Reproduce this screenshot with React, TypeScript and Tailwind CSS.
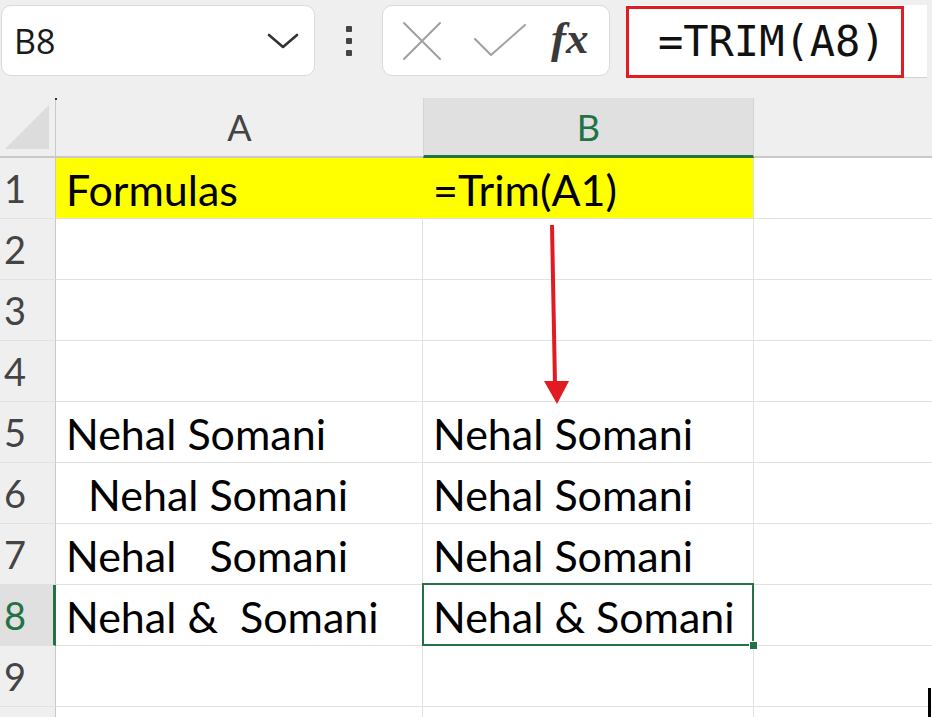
import React from "react";

const cellFont = { fontFamily: "Lato, 'Open Sans', sans-serif" };

const rows: { a: string; b: string }[] = [
  { a: "Formulas", b: "=Trim(A1)" },
  { a: "", b: "" },
  { a: "", b: "" },
  { a: "", b: "" },
  { a: "Nehal Somani", b: "Nehal Somani" },
  { a: "  Nehal Somani", b: "Nehal Somani" },
  { a: "Nehal   Somani", b: "Nehal Somani" },
  { a: "Nehal &  Somani", b: "Nehal & Somani" },
  { a: "", b: "" },
  { a: "", b: "" },
];

export default function App() {
  return (
    <div className="relative w-[932px] h-[717px] overflow-hidden bg-[#efefef]" style={{ fontFamily: "Lato, sans-serif" }}>
      {/* Top toolbar */}
      <div className="flex items-start h-[98px] pt-[5px]">
        <div className="ml-[1px] w-[314px] h-[71px] rounded-[10px] bg-white border border-[#dadada] flex items-center justify-between pl-[12px] pr-[14px]">
          <span className="text-[34px] text-[#1a1a1a] leading-none" style={{ fontFamily: "'Open Sans', sans-serif" }}>B8</span>
          <svg width="34" height="20" viewBox="0 0 34 20">
            <path d="M3 4 L17 16 L31 4" fill="none" stroke="#333" strokeWidth="2.6" strokeLinecap="round" strokeLinejoin="round" />
          </svg>
        </div>
        <div className="w-[67px] h-[71px] flex flex-col items-center justify-center gap-[6px]">
          <div className="w-[6px] h-[6px] rounded-[1px] bg-[#444]" />
          <div className="w-[6px] h-[6px] rounded-[1px] bg-[#444]" />
          <div className="w-[6px] h-[6px] rounded-[1px] bg-[#444]" />
        </div>
        <div className="w-[228px] h-[71px] rounded-[10px] bg-white border border-[#dadada] flex items-center pl-[19px]">
          <svg width="40" height="40" viewBox="0 0 40 40">
            <path d="M2 2 L38 38 M38 2 L2 38" stroke="#a0a0a0" strokeWidth="2" strokeLinecap="round" />
          </svg>
          <svg width="54" height="36" viewBox="0 0 54 36" className="ml-[31px]">
            <path d="M2 16 L18 32 L52 2" fill="none" stroke="#a0a0a0" strokeWidth="2" strokeLinecap="round" strokeLinejoin="round" />
          </svg>
          <span className="ml-[24px] text-[45px] italic font-bold text-[#3a3a3a] leading-none -mt-[4px]" style={{ fontFamily: "'Liberation Serif', serif" }}>fx</span>
        </div>
        <div className="ml-[16px] w-[301px] h-[73px] bg-white border-b border-[#d0d0d0] flex items-center">
          <div className="w-[278px] h-[72px] mt-[2px] border-[3px] border-[#e01c22] flex items-center pl-[29px]">
            <span className="text-[42px] text-[#111] leading-none" style={{ fontFamily: "'DejaVu Sans Mono', monospace" }}>=TRIM(A8)</span>
          </div>
        </div>
      </div>

      {/* Grid */}
      <div className="relative grid grid-cols-[56px_367px_331px_178px]" style={cellFont}>
        {/* header row */}
        <div className="h-[60px] border-r border-b-2 border-[#c9c9c9] flex items-end justify-end pr-[6px] pb-[7px]">
          <svg width="44" height="44" viewBox="0 0 44 44">
            <path d="M44 0 L44 44 L0 44 Z" fill="#dcdcdc" />
          </svg>
        </div>
        <div className="h-[60px] border-b-2 border-[#c9c9c9] flex items-center justify-center text-[36px] text-[#444]">A</div>
        <div className="h-[60px] bg-[#e0e0e0] border-l border-r border-[#d4d4d4] border-b-[3px] border-b-[#217346] flex items-center justify-center text-[36px] text-[#217346]">B</div>
        <div className="h-[60px] border-b-2 border-[#c9c9c9]" />

        {rows.map((r, i) => {
          const n = i + 1;
          const yellow = n === 1;
          const sel = n === 8;
          return (
            <React.Fragment key={n}>
              <div
                className={
                  "h-[61px] border-b border-[#e1e1e1] flex items-center pl-[4px] text-[38px] leading-none " +
                  (sel ? "bg-[#e0e0e0] text-[#217346] border-r-[3px] border-r-[#217346]" : "text-[#444] border-r border-r-[#c9c9c9]")
                }
              >
                {n <= 9 ? n : ""}
              </div>
              <div
                className={
                  "h-[61px] border-b border-[#e1e1e1] flex items-center pl-[10px] pt-[3px] text-[43px] text-black whitespace-pre leading-none " +
                  (yellow ? "bg-[#ffff00] border-r border-r-[#ffff00]" : "bg-white border-r border-r-[#e1e1e1]")
                }
              >
                {r.a}
              </div>
              <div
                className={
                  "relative h-[61px] border-b border-[#e1e1e1] flex items-center pl-[10px] pt-[3px] text-[43px] text-black whitespace-pre leading-none " +
                  (yellow ? "bg-[#ffff00] border-r border-r-[#e1e1e1]" : "bg-white border-r border-r-[#e1e1e1]") +
                  (sel ? " z-10" : "")
                }
              >
                {r.b}
                {sel && (
                  <>
                    <div className="absolute -left-[1px] -top-[2px] -right-[1px] -bottom-[1px] border-2 border-[#217346]" />
                    <div className="absolute -right-[5px] -bottom-[5px] w-[9px] h-[9px] bg-[#217346] border border-white" />
                  </>
                )}
              </div>
              <div className="h-[61px] border-b border-[#e1e1e1] bg-white" />
            </React.Fragment>
          );
        })}
        <svg className="absolute left-[540px] top-[125px] z-10" width="32" height="185" viewBox="0 0 32 185">
          <path d="M12 2 L15 162" stroke="#e01c22" strokeWidth="4" />
          <path d="M4 158 L29 158 L17 181 Z" fill="#e01c22" />
        </svg>
      </div>
      <div className="absolute left-[55px] top-[98px] w-[2px] h-[2px] bg-[#333]" />
      <div className="absolute left-[928px] top-[688px] w-[3px] h-[29px] bg-black" />
    </div>
  );
}
